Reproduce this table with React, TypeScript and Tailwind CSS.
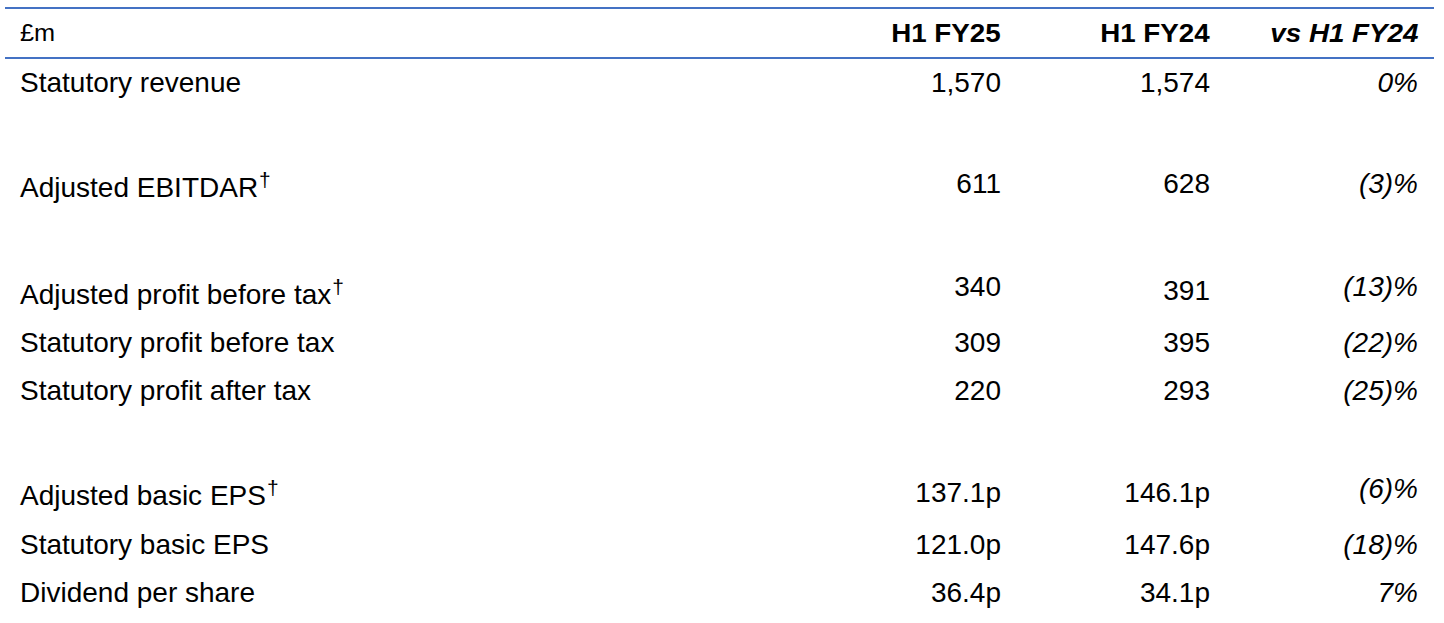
import React from "react";

type Row = {
  label: string;
  dagger?: boolean;
  values: [string, string, string];
  height: string;
  labelPt: string;
  valuePt: [string, string, string];
};

const rows: (Row | { spacer: string })[] = [
  { label: "Statutory revenue", values: ["1,570", "1,574", "0%"], height: "h-[47px]", labelPt: "pt-[8px]", valuePt: ["pt-[8px]", "pt-[8px]", "pt-[8px]"] },
  { spacer: "h-[53px]" },
  { label: "Adjusted EBITDAR", dagger: true, values: ["611", "628", "(3)%"], height: "h-[48px]", labelPt: "pt-[13px]", valuePt: ["pt-[9px]", "pt-[9px]", "pt-[9px]"] },
  { spacer: "h-[55px]" },
  { label: "Adjusted profit before tax", dagger: true, values: ["340", "391", "(13)%"], height: "h-[56px]", labelPt: "pt-[17px]", valuePt: ["pt-[9px]", "pt-[13px]", "pt-[9px]"] },
  { label: "Statutory profit before tax", values: ["309", "395", "(22)%"], height: "h-[48px]", labelPt: "pt-[9px]", valuePt: ["pt-[9px]", "pt-[9px]", "pt-[9px]"] },
  { label: "Statutory profit after tax", values: ["220", "293", "(25)%"], height: "h-[48px]", labelPt: "pt-[9px]", valuePt: ["pt-[9px]", "pt-[9px]", "pt-[9px]"] },
  { spacer: "h-[54px]" },
  { label: "Adjusted basic EPS", dagger: true, values: ["137.1p", "146.1p", "(6)%"], height: "h-[52px]", labelPt: "pt-[12px]", valuePt: ["pt-[9px]", "pt-[9px]", "pt-[5px]"] },
  { label: "Statutory basic EPS", values: ["121.0p", "147.6p", "(18)%"], height: "h-[48px]", labelPt: "pt-[9px]", valuePt: ["pt-[9px]", "pt-[9px]", "pt-[9px]"] },
  { label: "Dividend per share", values: ["36.4p", "34.1p", "7%"], height: "h-[48px]", labelPt: "pt-[9px]", valuePt: ["pt-[9px]", "pt-[9px]", "pt-[9px]"] },
];

const cols = "grid grid-cols-[1fr_209px_209px_208px]";

export default function App() {
  return (
    <div className="w-[1444px] h-[623px] bg-white text-black font-['Liberation_Sans',Arial,sans-serif] pt-[7px] pl-[5px] overflow-hidden">
      <div className="w-[1429px]">
        {/* Header */}
        <div className={`${cols} h-[52px] border-t-2 border-b-2 border-[#4472C4] text-[25px] leading-[30px]`}>
          <div className="pl-[15px] pt-[8px]">
            <span className="inline-block text-[23px] scale-x-[1.1] origin-left">£m</span>
          </div>
          <div className="pr-[16px] pt-[9px] text-right font-bold">
            <span className="inline-block scale-x-[1.11] origin-right">H1 FY25</span>
          </div>
          <div className="pr-[16px] pt-[9px] text-right font-bold">
            <span className="inline-block scale-x-[1.11] origin-right">H1 FY24</span>
          </div>
          <div className="pr-[16px] pt-[9px] text-right font-bold italic">
            <span className="inline-block scale-x-[1.11] origin-right">vs H1 FY24</span>
          </div>
        </div>

        {/* Body */}
        {rows.map((row, i) =>
          "spacer" in row ? (
            <div key={i} className={row.spacer} />
          ) : (
            <div key={i} className={`${cols} ${row.height} text-[28px] leading-[32px]`}>
              <div className={`pl-[15px] ${row.labelPt} whitespace-nowrap`}>
                {row.label}
                {row.dagger && <sup className="text-[21px] ml-[1px]">†</sup>}
              </div>
              <div className={`pr-[16px] text-right ${row.valuePt[0]}`}>{row.values[0]}</div>
              <div className={`pr-[16px] text-right ${row.valuePt[1]}`}>{row.values[1]}</div>
              <div className={`pr-[16px] text-right italic ${row.valuePt[2]}`}>{row.values[2]}</div>
            </div>
          )
        )}
      </div>
    </div>
  );
}
